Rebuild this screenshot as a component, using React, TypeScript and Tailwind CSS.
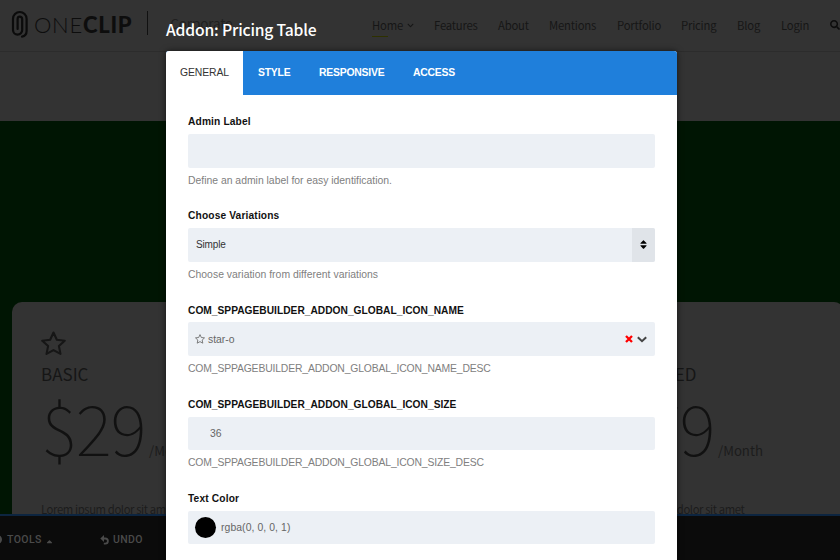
import React from 'react';
import { FaCaretUp, FaChevronDown, FaSearch, FaSort } from 'react-icons/fa';

const navItems = [
  { label: 'Features', className: 'ml-[22px] w-[42px]' },
  { label: 'About', className: 'ml-[22px] w-[29px]' },
  { label: 'Mentions', className: 'ml-[22px] w-[46px]' },
  { label: 'Portfolio', className: 'ml-[22px] w-[42px]' },
  { label: 'Pricing', className: 'ml-[22px] w-[34px]' },
  { label: 'Blog', className: 'ml-[22px] w-[22px]' },
  { label: 'Login', className: 'ml-[22px] w-[27px]' },
];

function ClipLogo() {
  return (
    <svg width="18" height="30" viewBox="0 0 18 30" fill="none" stroke="#0b0b0b" strokeWidth="2.2" strokeLinecap="round">
      <path d="M11 26.600c3-.5 4.600-2.600 4.600-5.600V8.800a6.800 6.800 0 0 0-13.600 0v11.200a4.600 4.600 0 0 0 9.200 0V9a2.300 2.300 0 0 0-4.600 0v10" />
    </svg>
  );
}

function StarIcon({ size, className }: { size: number; className?: string }) {
  return (
    <svg width={size} height={size} viewBox="0 0 24 24" fill="none" stroke="currentColor" strokeWidth="2" strokeLinejoin="round" className={className}>
      <path d="M12 1.500l3.200 6.900 7.600.9-5.600 5.200 1.500 7.500L12 18.300 5.300 22l1.500-7.500L1.200 9.300l7.600-.9z" />
    </svg>
  );
}

function UndoIcon() {
  return (
    <svg width="9" height="10" viewBox="0 0 9 10" className="ml-[46px]">
      <path d="M0.300 3.500L4 0v7z" fill="currentColor" />
      <path d="M3.500 3.500h1.800a2.500 2.500 0 0 1 0 5.200H3.800" fill="none" stroke="currentColor" strokeWidth="1.800" />
    </svg>
  );
}

function Header() {
  return (
    <header className="flex h-[52px] items-start border-b border-[#2c2c2c] bg-[#333]">
      <div className="ml-[11px] mt-[10px]">
        <ClipLogo />
      </div>
      <div className="ml-[5px] mt-[9px] flex w-[101px] font-['Lato'] text-[22px] leading-8 text-[#0d0d0d]">
        <span className="w-[49px] font-light tracking-[0.7px]">ONE</span>
        <span className="font-black tracking-[0.7px]">CLIP</span>
      </div>
      <div className="ml-[13px] mt-[11px] h-[24px] w-px bg-[#111]" />
      <div className="ml-[22px] mt-[13px] w-[203px] text-[13.500px] leading-5 tracking-[-0.15px] text-[#202020]">
        Corporate
      </div>
      <nav className="mt-[15px] flex whitespace-nowrap text-[11.300px] leading-5 tracking-[-0.2px] text-[#161616]">
        <div className="flex w-[40px] items-center">
          <div className="relative">
            Home
            <span className="absolute left-0 top-[21px] h-px w-[16px] bg-[#2e3100]" />
          </div>
          <FaChevronDown size={7} className="ml-[4px] shrink-0" />
        </div>
        {navItems.map((item) => (
          <div key={item.label} className={item.className}>
            {item.label}
          </div>
        ))}
        <FaSearch size={10} className="ml-[22px] mt-[5px] shrink-0 text-[#0d0d0d]" />
      </nav>
    </header>
  );
}

interface PlanProps {
  name: string;
  price: string;
}

function Plan({ name, price }: PlanProps) {
  return (
    <div className="w-[153px]">
      <StarIcon size={25} className="text-[#161616]" />
      <div className="mt-[6px] text-[17px] leading-6 text-[#161616]">{name}</div>
      <div className="mt-[4px] flex h-[72px] items-baseline text-[#111]">
        <span className="w-[103px] text-[69px] font-thin leading-[72px] tracking-[-1.200px]">{price}</span>
        <span className="ml-[5px] text-[13.200px] leading-5 text-[#1c1c1c]">/Month</span>
      </div>
      <div className="mt-[37px] text-[11.300px] leading-5 tracking-[-0.4px] text-[#1c1c1c]">Lorem ipsum dolor sit amet</div>
    </div>
  );
}

function Toolbar() {
  return (
    <footer className="absolute inset-x-0 bottom-0 flex h-[46px] items-center border-t-2 border-[#0d2540] bg-[#0b0b0b] pt-[3px] font-['Roboto'] text-[10.500px] font-medium tracking-[0.4px] text-[#4a4a4a]">
      <div className="-ml-[7px] h-[9px] w-[9px] rounded-full border-2 border-[#4a4a4a]" />
      <span className="ml-[5px] w-[35px]">TOOLS</span>
      <FaCaretUp size={9} className="ml-[3px] mt-[3px]" />
      <UndoIcon />
      <span className="ml-[4px]">UNDO</span>
    </footer>
  );
}

interface FieldProps {
  label: string;
  labelClass?: string;
  desc?: string;
  descClass?: string;
  children?: React.ReactNode;
}

function Field({ label, labelClass = '', desc, descClass = '', children }: FieldProps) {
  return (
    <div className="h-[94.200px]">
      <div className={`h-[19px] pt-[0.3px] text-[10.200px] font-bold leading-[14px] text-[#111] ${labelClass}`}>{label}</div>
      <div className="flex h-[33.500px] items-center overflow-hidden rounded-[2px] bg-[#ecf0f5] text-[10.400px] text-[#666]">
        {children}
      </div>
      {desc && <div className={`mt-[6px] text-[10.400px] leading-[14px] text-[#808080] ${descClass}`}>{desc}</div>}
    </div>
  );
}

function AddonModal() {
  return (
    <div className="absolute left-[166px] top-[18px] w-[511px] whitespace-nowrap">
      <h1 className="h-[33px] text-[15.700px] font-medium leading-6 tracking-[-0.18px] text-white">Addon: Pricing Table</h1>
      <div className="h-[520px] overflow-hidden rounded-t-[3px] bg-white font-['Liberation_Sans'] shadow-[0_0_6px_rgba(0,0,0,0.6)]">
        <div className="flex h-[43.500px] items-center bg-[#1f7fdb] text-[10.400px] font-bold tracking-[-0.22px] text-white">
          <div className="flex h-full w-[77px] items-center justify-center bg-white pt-px font-normal tracking-[-0.1px] text-[#333]">
            GENERAL
          </div>
          <div className="ml-[15px] w-[61px] pt-px">STYLE</div>
          <div className="w-[94px] pt-px">RESPONSIVE</div>
          <div className="pt-px">ACCESS</div>
        </div>
        <div className="px-[22px] pt-[20.500px]">
          <Field label="Admin Label" labelClass="tracking-[0.15px]" desc="Define an admin label for easy identification." />
          <Field
            label="Choose Variations"
            labelClass="tracking-[0.15px]"
            desc="Choose variation from different variations"
            descClass="tracking-[0.02px]"
          >
            <span className="ml-[8px] text-[10px] tracking-[-0.15px] text-[#333]">Simple</span>
            <div className="ml-auto flex h-full w-[23px] items-center justify-center bg-[#e0e4e9] text-black">
              <FaSort size={11} />
            </div>
          </Field>
          <Field
            label="COM_SPPAGEBUILDER_ADDON_GLOBAL_ICON_NAME"
            labelClass="tracking-[0.02px]"
            desc="COM_SPPAGEBUILDER_ADDON_GLOBAL_ICON_NAME_DESC"
            descClass="tracking-[-0.16px]"
          >
            <StarIcon size={10} className="ml-[7px]" />
            <span className="ml-[3px] pt-px">star-o</span>
            <svg width="8" height="8" viewBox="0 0 8 8" stroke="#f00" strokeWidth="2.3" className="ml-auto">
              <path d="M1 1l6 6M7 1L1 7" />
            </svg>
            <svg width="10" height="7" viewBox="0 0 10 7" fill="none" stroke="#444" strokeWidth="2" className="ml-[4px] mr-[8px] mt-px">
              <path d="M.8 1.200L5 5.200l4.200-4" />
            </svg>
          </Field>
          <Field
            label="COM_SPPAGEBUILDER_ADDON_GLOBAL_ICON_SIZE"
            labelClass="tracking-[0.02px]"
            desc="COM_SPPAGEBUILDER_ADDON_GLOBAL_ICON_SIZE_DESC"
            descClass="tracking-[-0.16px]"
          >
            <span className="ml-[22px]">36</span>
          </Field>
          <Field label="Text Color" labelClass="tracking-[0.15px]">
            <span className="ml-[7px] h-[21px] w-[21px] rounded-full bg-black" />
            <span className="ml-[5px] tracking-[0.08px]">rgba(0, 0, 0, 1)</span>
          </Field>
        </div>
      </div>
    </div>
  );
}

export default function App() {
  return (
    <div className="relative h-[560px] w-[840px] overflow-hidden bg-[#333] font-['Noto_Sans_CJK_JP',sans-serif]">
      <Header />
      <main className="mt-[69px] h-[439px] bg-[#001503] pt-[181px]">
        <div className="ml-[12px] flex h-[258px] w-[832px] justify-between whitespace-nowrap rounded-[10px] bg-[#333] pl-[29px] pr-[81px] pt-[29px]">
          <Plan name="BASIC" price="$29" />
          <Plan name="ADVANCED" price="$79" />
        </div>
      </main>
      <Toolbar />
      <AddonModal />
    </div>
  );
}
